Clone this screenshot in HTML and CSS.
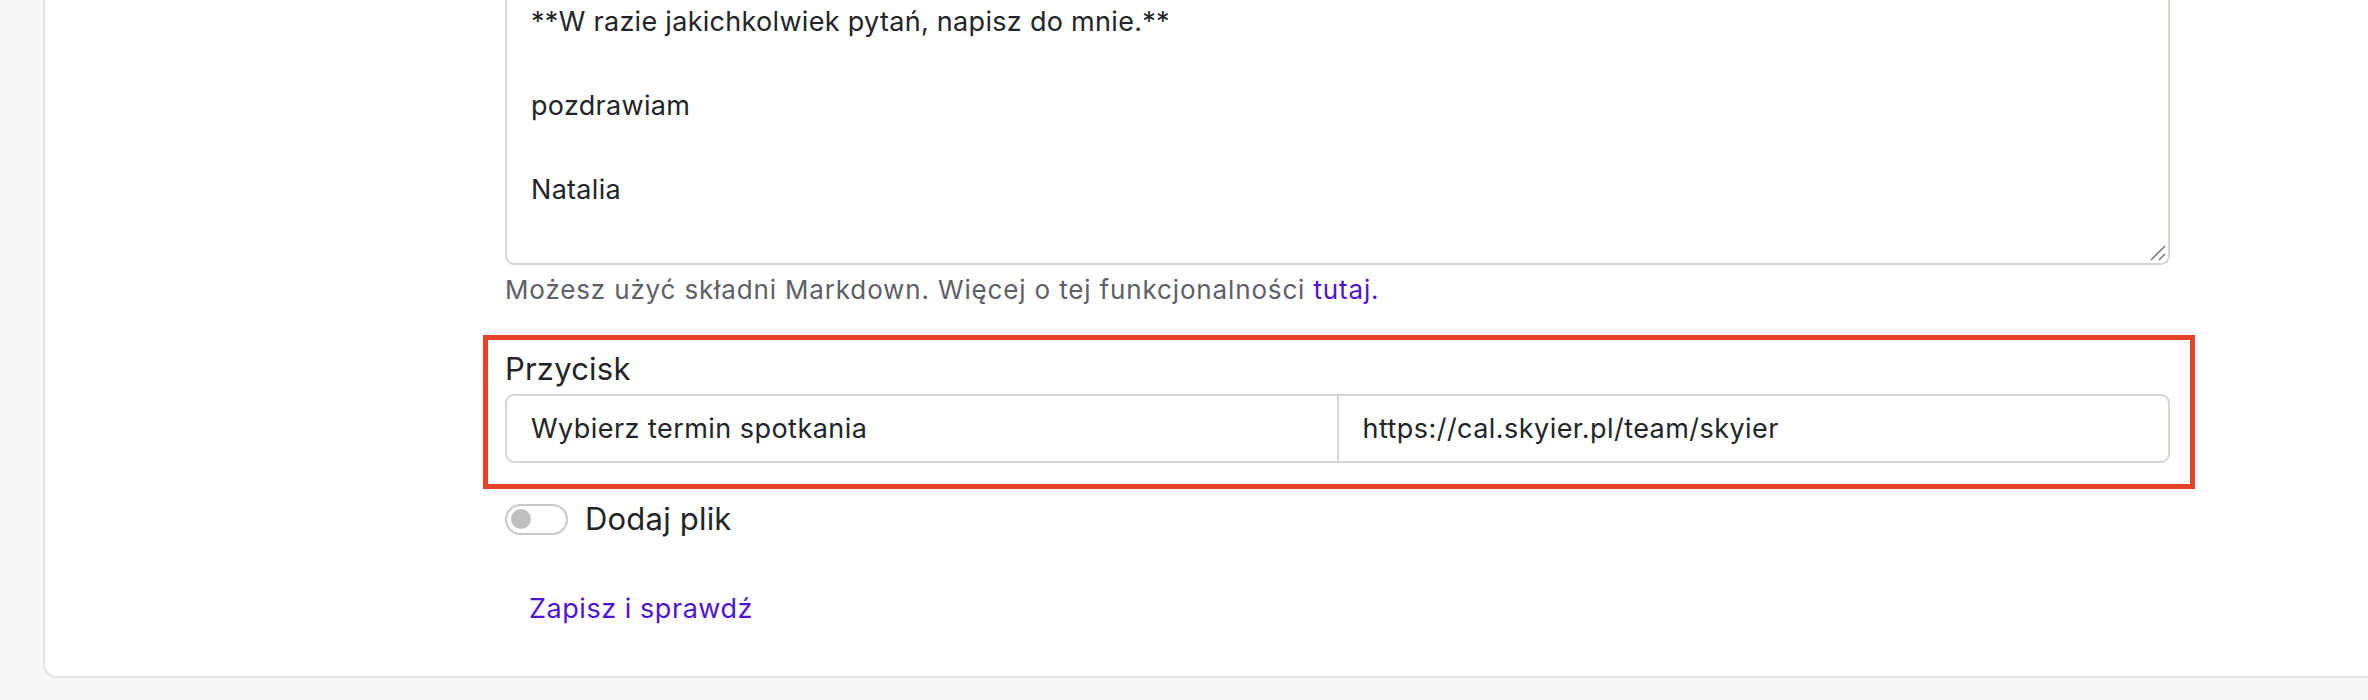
FILE: index.html
```html
<!DOCTYPE html>
<html lang="pl">
<head>
<meta charset="utf-8">
<title>Formularz</title>
<link rel="stylesheet" href="styles.css">
</head>
<body>
<div class="page">
  <div class="card">
    <div class="form">
      <div class="field">
        <div class="textarea">
          <p>**W razie jakichkolwiek pytań, napisz do mnie.**</p>
          <p class="blank">&nbsp;</p>
          <p>pozdrawiam</p>
          <p class="blank">&nbsp;</p>
          <p>Natalia</p>
          <svg class="resize" width="16" height="16" viewBox="0 0 16 16" aria-hidden="true">
            <line x1="1" y1="15" x2="15" y2="1" stroke="#7a7a7a" stroke-width="1.6"/>
            <line x1="9" y1="15" x2="15" y2="9" stroke="#7a7a7a" stroke-width="1.6"/>
          </svg>
        </div>
        <p class="help">Możesz użyć składni Markdown. Więcej o tej funkcjonalności <a class="link" href="#">tutaj.</a></p>
      </div>

      <div class="highlight">
        <div class="label">Przycisk</div>
        <div class="input-group">
          <div class="input">Wybierz termin spotkania</div>
          <div class="input input-right">https://cal.skyier.pl/team/skyier</div>
        </div>
      </div>

      <div class="toggle-row">
        <span class="toggle"><span class="knob"></span></span>
        <span class="toggle-label">Dodaj plik</span>
      </div>

      <button class="link-btn" type="button">Zapisz i sprawdź</button>
    </div>
  </div>
</div>
</body>
</html>
```

FILE: styles.css
```css
* {
  box-sizing: border-box;
}

html, body {
  margin: 0;
  padding: 0;
  background: #f7f8fa;
  overflow: hidden;
}

body {
  font-family: Inter, "Liberation Sans", Arial, sans-serif;
  color: #212529;
  width: 2368px;
  height: 700px;
}

.page {
  padding-left: 43px;
}

.card {
  width: 2400px;
  background: #ffffff;
  border-left: 2px solid #e2e3e5;
  border-bottom: 2px solid #e2e3e5;
  border-bottom-left-radius: 14px;
  padding: 0 0 34px 460px;
}

.form {
  width: 1665px;
  display: flex;
  flex-direction: column;
  align-items: flex-start;
}

.field {
  width: 100%;
}

.textarea {
  position: relative;
  width: 100%;
  border: 2px solid #d1d5db;
  border-top: none;
  border-radius: 0 0 9px 9px;
  padding: 1px 24px 52px 24px;
  font-size: 27px;
  line-height: 42px;
  letter-spacing: 0.3px;
  color: #212529;
}

.textarea p {
  margin: 0;
}

.resize {
  position: absolute;
  right: 2px;
  bottom: 2px;
}

.help {
  margin: 7px 0 0 0;
  font-size: 26px;
  line-height: 36px;
  letter-spacing: 0.85px;
  color: #5d6067;
}

.link {
  color: #4e14d5;
  text-decoration: none;
}

.highlight {
  width: calc(100% + 47px);
  margin: 27px -25px 0 -22px;
  border: 5px solid #e8412a;
  padding: 8px 20px 21px 17px;
}

.label {
  font-size: 31px;
  line-height: 42px;
  letter-spacing: 0.2px;
  color: #212529;
  margin-bottom: 4px;
}

.input-group {
  display: flex;
  width: 100%;
  border: 2px solid #d1d5db;
  border-radius: 9px;
}

.input {
  flex: 1 1 0;
  padding: 11.5px 24px;
  font-size: 27px;
  line-height: 42px;
  letter-spacing: 0.45px;
  color: #212529;
}

.input-right {
  border-left: 2px solid #d1d5db;
}

.toggle-row {
  display: flex;
  align-items: center;
  gap: 17px;
  margin-top: 9px;
}

.toggle {
  display: flex;
  align-items: center;
  width: 63px;
  height: 31px;
  border: 2px solid #c9c9c9;
  border-radius: 16px;
  padding-left: 4px;
  background: #ffffff;
}

.knob {
  width: 20px;
  height: 20px;
  border-radius: 50%;
  background: #bfbfbf;
}

.toggle-label {
  font-size: 31px;
  line-height: 42px;
  letter-spacing: 0.2px;
  color: #212529;
}

.link-btn {
  margin-top: 36px;
  padding: 12px 24px;
  border: none;
  background: none;
  font-family: inherit;
  font-size: 27px;
  line-height: 42px;
  letter-spacing: 0.55px;
  color: #4e14d5;
  cursor: pointer;
}
```
